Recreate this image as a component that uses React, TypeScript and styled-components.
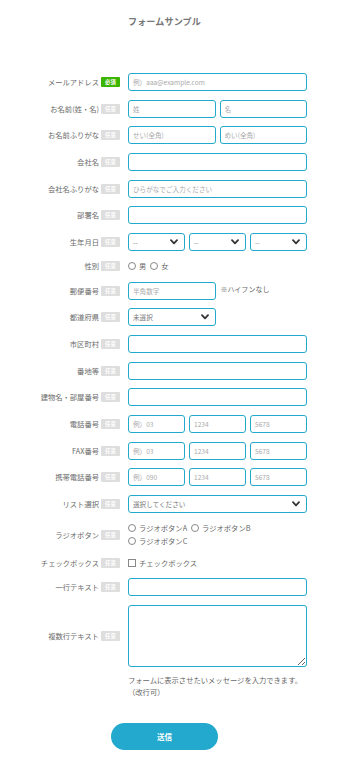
import React from "react";
import styled, { createGlobalStyle } from "styled-components";

const Global = createGlobalStyle`
  html, body { margin: 0; padding: 0; background: #fff; }
  body { font-family: "Noto Sans CJK JP", "Noto Sans", sans-serif; color: #555; }
  * { box-sizing: border-box; }
`;

const ACCENT = "#23a9cc";

const Page = styled.div`
  width: 329px;
  padding-top: 14px;
  padding-bottom: 20px;
  display: flex;
  flex-direction: column;
  align-items: center;
`;

const Title = styled.h1`
  margin: 0;
  font-size: 9.1px;
  line-height: 14px;
  font-weight: 700;
  color: #777;
  letter-spacing: 0.1px;
`;

const Form = styled.form`
  align-self: stretch;
  margin-top: 45px;
  display: flex;
  flex-direction: column;
  gap: 8.7px;
`;

const Row = styled.div`
  display: grid;
  grid-template-columns: 120px 179px;
  column-gap: 8px;
  align-items: center;
`;

const LabelCell = styled.div`
  display: flex;
  justify-content: flex-end;
  align-items: center;
  gap: 2px;
`;

const LabelText = styled.span`
  font-size: 7.3px;
  line-height: 10px;
  color: #6a6a6a;
  white-space: nowrap;
`;

const Badge = styled.span<{ $required?: boolean }>`
  width: 19px;
  height: 10px;
  border-radius: 1px;
  background: ${(p) => (p.$required ? "#3cb500" : "#dedede")};
  color: #fff;
  font-size: 5.4px;
  font-weight: 700;
  display: flex;
  align-items: center;
  justify-content: center;
  flex: none;
`;

const Input = styled.input`
  display: block;
  width: 100%;
  height: 18px;
  border: 1px solid ${ACCENT};
  border-radius: 3px;
  padding: 0 4px;
  font-family: inherit;
  font-size: 6.6px;
  color: #555;
  background: #fff;
  outline: none;
  &::placeholder { color: #aaa; }
`;

const Split = styled.div<{ $cols: number; $width?: string }>`
  display: grid;
  grid-template-columns: repeat(${(p) => p.$cols}, 1fr);
  column-gap: 4px;
  width: ${(p) => p.$width || "100%"};
`;

const Inline = styled.div`
  display: flex;
  align-items: center;
  gap: 5px;
`;

const Note = styled.span`
  font-size: 7px;
  color: #666;
  white-space: nowrap;
  margin-top: -3px;
`;

const SelectWrap = styled.div<{ $width?: string }>`
  position: relative;
  display: flex;
  width: ${(p) => p.$width || "100%"};
`;

const Select = styled.select`
  display: block;
  width: 100%;
  height: 18px;
  margin: 0;
  appearance: none;
  -webkit-appearance: none;
  border: 1px solid ${ACCENT};
  border-radius: 3px;
  padding: 0 4px;
  font-family: inherit;
  font-size: 6.6px;
  color: #777;
  background: #fff;
  outline: none;
`;

const Chevron = styled.svg`
  position: absolute;
  right: 7px;
  top: 6px;
  width: 8px;
  height: 6px;
  pointer-events: none;
`;

const OptionGroup = styled.div`
  display: flex;
  flex-wrap: wrap;
  column-gap: 4px;
`;

const Choice = styled.label`
  display: flex;
  align-items: center;
  gap: 3px;
  height: 13px;
  font-size: 7.3px;
  color: #666;
  white-space: nowrap;
`;

const RadioMark = styled.input`
  appearance: none;
  -webkit-appearance: none;
  margin: 0;
  width: 8px;
  height: 8px;
  border: 0.8px solid #888;
  border-radius: 50%;
  background: #fff;
  flex: none;
`;

const CheckMark = styled(RadioMark)`
  border-radius: 0;
`;

const TextArea = styled.textarea`
  width: 100%;
  height: 62px;
  border: 1px solid ${ACCENT};
  border-radius: 3px;
  padding: 4px;
  font-family: inherit;
  font-size: 6.6px;
  resize: both;
  outline: none;
  display: block;
`;

const Message = styled.p`
  grid-column: 2;
  margin: 0;
  font-size: 7.3px;
  line-height: 11.3px;
  color: #666;
  white-space: nowrap;
`;

const SubmitArea = styled.div`
  display: flex;
  justify-content: center;
  margin-top: 16px;
`;

const Submit = styled.button`
  width: 107px;
  height: 27px;
  border: none;
  border-radius: 14px;
  background: #22a9cd;
  color: #fff;
  font-family: inherit;
  font-size: 7.5px;
  font-weight: 700;
  cursor: pointer;
`;

const Label: React.FC<{ text: string; required?: boolean }> = ({ text, required }) => (
  <LabelCell>
    <LabelText>{text}</LabelText>
    <Badge $required={required}>{required ? "必須" : "任意"}</Badge>
  </LabelCell>
);

const Dropdown: React.FC<{ value: string; width?: string }> = ({ value, width }) => (
  <SelectWrap $width={width}>
    <Select defaultValue={value}>
      <option>{value}</option>
    </Select>
    <Chevron viewBox="0 0 8 6">
      <path d="M1 1.2 L4 4.3 L7 1.2" fill="none" stroke="#333" strokeWidth="1.8" strokeLinecap="round" strokeLinejoin="round" />
    </Chevron>
  </SelectWrap>
);

const Phone: React.FC<{ first: string }> = ({ first }) => (
  <Split $cols={3}>
    <Input placeholder={first} />
    <Input placeholder="1234" />
    <Input placeholder="5678" />
  </Split>
);

export default function App() {
  return (
    <>
      <Global />
      <Page>
        <Title>フォームサンプル</Title>
        <Form onSubmit={(e) => e.preventDefault()}>
          <Row>
            <Label text="メールアドレス" required />
            <Input placeholder="例）aaa@example.com" />
          </Row>
          <Row>
            <Label text="お名前(姓・名)" />
            <Split $cols={2}>
              <Input placeholder="姓" />
              <Input placeholder="名" />
            </Split>
          </Row>
          <Row>
            <Label text="お名前ふりがな" />
            <Split $cols={2}>
              <Input placeholder="せい(全角)" />
              <Input placeholder="めい(全角)" />
            </Split>
          </Row>
          <Row>
            <Label text="会社名" />
            <Input />
          </Row>
          <Row>
            <Label text="会社名ふりがな" />
            <Input placeholder="ひらがなでご入力ください" />
          </Row>
          <Row>
            <Label text="部署名" />
            <Input />
          </Row>
          <Row>
            <Label text="生年月日" />
            <Split $cols={3}>
              <Dropdown value="--" />
              <Dropdown value="--" />
              <Dropdown value="--" />
            </Split>
          </Row>
          <Row>
            <Label text="性別" />
            <OptionGroup>
              <Choice><RadioMark type="radio" name="sex" />男</Choice>
              <Choice><RadioMark type="radio" name="sex" />女</Choice>
            </OptionGroup>
          </Row>
          <Row>
            <Label text="郵便番号" />
            <Inline>
              <Split $cols={1} $width="87.5px">
                <Input placeholder="半角数字" />
              </Split>
              <Note>※ハイフンなし</Note>
            </Inline>
          </Row>
          <Row>
            <Label text="都道府県" />
            <Dropdown value="未選択" width="87.5px" />
          </Row>
          <Row>
            <Label text="市区町村" />
            <Input />
          </Row>
          <Row>
            <Label text="番地等" />
            <Input />
          </Row>
          <Row>
            <Label text="建物名・部屋番号" />
            <Input />
          </Row>
          <Row>
            <Label text="電話番号" />
            <Phone first="例）03" />
          </Row>
          <Row>
            <Label text="FAX番号" />
            <Phone first="例）03" />
          </Row>
          <Row>
            <Label text="携帯電話番号" />
            <Phone first="例）090" />
          </Row>
          <Row>
            <Label text="リスト選択" />
            <Dropdown value="選択してください" />
          </Row>
          <Row>
            <Label text="ラジオボタン" />
            <OptionGroup>
              <Choice><RadioMark type="radio" name="r" />ラジオボタンA</Choice>
              <Choice><RadioMark type="radio" name="r" />ラジオボタンB</Choice>
              <Choice><RadioMark type="radio" name="r" />ラジオボタンC</Choice>
            </OptionGroup>
          </Row>
          <Row>
            <Label text="チェックボックス" />
            <OptionGroup>
              <Choice><CheckMark type="checkbox" />チェックボックス</Choice>
            </OptionGroup>
          </Row>
          <Row>
            <Label text="一行テキスト" />
            <Input />
          </Row>
          <Row>
            <Label text="複数行テキスト" />
            <TextArea />
          </Row>
          <Row>
            <Message>
              フォームに表示させたいメッセージを入力できます。
              <br />
              （改行可）
            </Message>
          </Row>
          <SubmitArea>
            <Submit type="submit">送信</Submit>
          </SubmitArea>
        </Form>
      </Page>
    </>
  );
}
